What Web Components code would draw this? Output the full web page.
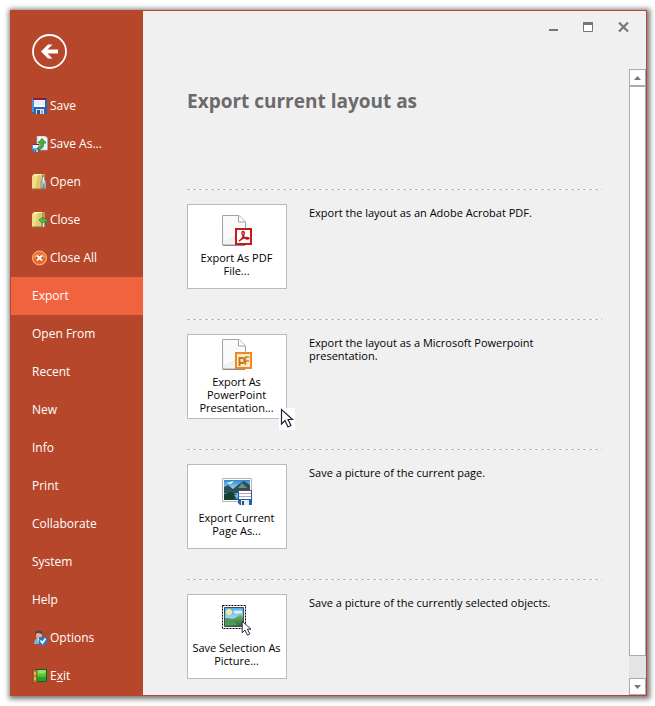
<!DOCTYPE html>
<html lang="en">
<head>
<meta charset="utf-8">
<title>Export</title>
<style>
html { background: #fff; }
body { margin: 0; box-sizing: border-box; min-height: 100vh; padding: 10px 8px 10px 10px; display: flex; font-family: "Open Sans", "Noto Sans", sans-serif; font-size: 12px; color: #000; }
</style>
</head>
<body>
<backstage-window>
  <backstage-nav slot="nav">
    <nav-item icon="save">Save</nav-item>
    <nav-item icon="saveas">Save As...</nav-item>
    <nav-item icon="open">Open</nav-item>
    <nav-item icon="close">Close</nav-item>
    <nav-item icon="closeall">Close All</nav-item>
    <nav-item selected>Export</nav-item>
    <nav-item>Open From</nav-item>
    <nav-item>Recent</nav-item>
    <nav-item>New</nav-item>
    <nav-item>Info</nav-item>
    <nav-item>Print</nav-item>
    <nav-item>Collaborate</nav-item>
    <nav-item>System</nav-item>
    <nav-item>Help</nav-item>
    <nav-item icon="options">Options</nav-item>
    <nav-item icon="exit">E<u>x</u>it</nav-item>
  </backstage-nav>
  <window-controls slot="controls"></window-controls>
  <export-panel heading="Export current layout as">
    <export-option icon="pdf" label="Export As PDF File...">Export the layout as an Adobe Acrobat PDF.</export-option>
    <export-option icon="ppt" label="Export As PowerPoint Presentation..." pointer>Export the layout as a Microsoft Powerpoint presentation.</export-option>
    <export-option icon="page" label="Export Current Page As...">Save a picture of the current page.</export-option>
    <export-option icon="selection" label="Save Selection As Picture...">Save a picture of the currently selected objects.</export-option>
  </export-panel>
  <scroll-bar slot="scroll"></scroll-bar>
</backstage-window>

<script>
const floppy = `<path d="M0 0H15V16H2L0 14Z" fill="#2563b4"/><path d="M0 0H2V14H0Z" fill="#4a91d6"/><path d="M1 0H14V2H1Z" fill="#8c1748"/><path d="M2 2H13V9H2Z" fill="#fafafa"/><path d="M2 4H13M2 6H13" stroke="#dcdfe4"/><path d="M4 11H12V16H4Z" fill="#e2e5e9"/><path d="M5 12H8V16H5Z" fill="#15579e"/><path d="M9 12H11V16H9Z" fill="#a7adb5"/>`;
const folder = `<path d="M0 2L2 0H10V15H0Z" fill="#f2dd8e"/><path d="M0 2H2V0H10V2Z" fill="#fff0ac"/><path d="M6 1H10V15H3Z" fill="#e0c871"/><path d="M10 0H13V14H10Z" fill="#b89c48"/><path d="M0 15H13" stroke="#8f7230"/>`;
const sheet = `<path d="M1.500 1.500H18L24.500 8V31H1.500Z" fill="#f0f1f1" stroke="#a3a3a3"/><path d="M2 2H17V8H24V16L3 27Z" fill="#fafafa"/><path d="M17.500 1.500V8H24" fill="#fff" stroke="#a3a3a3"/><path d="M2 31.500H24" stroke="#888"/>`;
const arrowShape = `<path d="M1.500 1.500V16L5 12.500L8 19L11 17.500L8 11.500H12.500Z" fill="#fff" stroke="#222336" stroke-width="1.200"/>`;
const landscapeDefs = `<defs><linearGradient id="sky" x2="0" y2="1"><stop stop-color="#4cadf0"/><stop offset="1" stop-color="#e7f6ef"/></linearGradient><linearGradient id="hill" x2="0" y2="1"><stop stop-color="#79b66c"/><stop offset="1" stop-color="#236b3a"/></linearGradient><linearGradient id="lake" x2="0" y2="1"><stop stop-color="#2b88d0"/><stop offset=".5" stop-color="#b9dcf1"/><stop offset="1" stop-color="#0c4e68"/></linearGradient></defs>`;

const icons = {
  save: [16, floppy],
  saveas: [16, `<path d="M5 0H13L15.500 2V14H5Z" fill="#eef4f7" stroke="#a4b9c4" stroke-width=".7"/><g transform="translate(0 8) scale(.5)">${floppy}</g><path d="M5 12C9 12 9 9 8.500 7H6L10 2.500L14 7H11.500C12 11 10 13.500 6 13.500Z" fill="#3fbd2d" stroke="#176f19" stroke-width=".7"/>`],
  open: [16, `${folder}<path d="M11 2L9 8V15H10.500L11.500 10L12.500 15H14V8Z" fill="#b8bec2" stroke="#687078" stroke-width=".6"/><path d="M11.500 3V8" stroke="#f4f4f4"/>`],
  close: [16, `${folder}<path d="M7 8L11 5V7C14 6 15.500 8 15.500 11C14 10 13 9 11 10V12Z" fill="#51bd50" stroke="#237b33" stroke-width=".7"/><path d="M11.500 11V15" stroke="#eee" stroke-width="2"/><path d="M10 11V15M13 11V15" stroke="#59656b"/>`],
  closeall: [16, `<circle cx="7.500" cy="8" r="7" fill="#f36b27" stroke="#ffbd8f"/><path d="M2 7A6 6 0 0 1 13 7C10 9 5 9 2 7Z" fill="#ffa35f"/><path d="M5 5.500L10 10.500M10 5.500L5 10.500" stroke="#8f5038" stroke-width="4"/><path d="M5 5.500L10 10.500M10 5.500L5 10.500" stroke="#fff3e7" stroke-width="2.300"/>`],
  options: [16, `<path d="M2 14C2 10 4 8 7 8S12 10 12 14Z" fill="#78b6e7"/><path d="M5.500 8L7 12L8.500 8Z" fill="#fff"/><ellipse cx="7" cy="5" rx="3" ry="4" fill="#e3b08c"/><path d="M3.500 5C3 1 5 .5 7 .5S11 1 10.500 5C9 3 7 3 5 3Z" fill="#454a4e"/><path d="M7 7H15V14L11 16L7 14Z" fill="#2877c9"/><path d="M8.500 10.500L10.500 13L13.500 8.500" fill="none" stroke="#fff" stroke-width="1.700"/>`],
  exit: [16, `<path d="M1 1H15V14H1Z" fill="#185b2c"/><path d="M5 2H14V13H5Z" fill="#8ee06a"/><path d="M5 7C8 4 11 8 14 4V13H5Z" fill="#4ece22"/><path d="M5 10C8 7 11 11 14 8V13H5Z" fill="#21a52c"/><path d="M1 1L5 2V14L1 16Z" fill="#bb842a" stroke="#6e4518" stroke-width=".8"/><path d="M2 4H4V7H2ZM2 9H4V12H2Z" fill="#e2b75b"/>`],
  pdf: [32, `${sheet}<path d="M15 15H30V30H15Z" fill="#fff" stroke="#cf1719" stroke-width="2"/><path d="M18 27C21 26 24 20 23 18C21 16 20 20 22 22C24 25 27 25.500 28 24.500C27 22.500 22 23.500 18 27Z" fill="none" stroke="#b6191b" stroke-width="1.400"/>`],
  ppt: [32, `${sheet}<path d="M15 15H30V30H15Z" fill="#fbe9cd" stroke="#f18624" stroke-width="2"/><path d="M18.500 28V20H21.500C24 20 24 25 21.500 25H18.500" fill="none" stroke="#c27a1b" stroke-width="2"/><path d="M28 19H24.500V27M24.500 23H28" fill="none" stroke="#c98529" stroke-width="1.500"/>`],
  page: [32, `${landscapeDefs}<path d="M1.500 4.500H30.500V27.500H1.500Z" fill="#fff" stroke="#b3b3b3"/><g transform="translate(0 1)"><path d="M3 5H29V25H3Z" fill="url(#lake)"/><path d="M3 12L7 10L12 14L18 9L23 6L29 10V18H3Z" fill="#28515b"/><path d="M17 13L21 8L26 13Z" fill="#6b8e8d"/><path d="M5 8L13 6L10 9Z" fill="#f1f6fa"/><path d="M3 19L10 17L17 20L12 25H3Z" fill="#193d31"/><path d="M13 20L20 18L16 24Z" fill="#79b8d8"/></g><g transform="translate(17 16)"><path d="M0 0H14V15H2L0 13Z" fill="#245fad"/><path d="M1 0H13V1H1Z" fill="#9c294b"/><path d="M1 1H13V9H1Z" fill="#fff"/><path d="M1 3.500H13M1 6.500H13" stroke="#a9adb9"/><path d="M3 10H11V15H3Z" fill="#e6f0f2"/><path d="M4 11H6V15H4Z" fill="#1e508e"/></g>`],
  selection: [32, `${landscapeDefs}<path d="M1.500 1.500H24.500V24.500H1.500Z" fill="#fff" stroke="#000" stroke-dasharray="2 1"/><path d="M3.500 3.500H22.500V22.500H3.500Z" fill="url(#sky)" stroke="#424961"/><path d="M12 8C14 4 17 8 20 6L22 9L15 10Z" fill="#edf8ff" opacity=".8"/><path d="M4 14C7 13 11 16 14 14S20 9 22 13V22H4Z" fill="url(#hill)"/><path d="M4 16C9 13 14 20 18 21L4 22Z" fill="#4c995a"/><circle cx="8" cy="8" r="2.500" fill="#ffe374" stroke="#fff4b8"/><g transform="translate(20 16) scale(.8)">${arrowShape}</g>`]
};
const drawIcon = (name) => {
  const [size, art] = icons[name];
  return `<svg width="${size}" height="${size}" viewBox="0 0 ${size} ${size}" aria-hidden="true">${art}</svg>`;
};

class BackstageWindow extends HTMLElement {
  connectedCallback() {
    this.attachShadow({mode: "open"}).innerHTML = `<style>
      :host { flex: 1; min-width: 0; display: grid; grid-template-columns: auto 1fr; background: #f0f0f0; border: 1px solid #b7472a; box-shadow: 1px 1px 5px 2px #777; }
      main { display: grid; grid-template: auto 1fr / minmax(0, 1fr) auto; min-width: 0; }
      .controls { grid-column: 1 / -1; }
    </style><slot name="nav"></slot><main><div class="controls"><slot name="controls"></slot></div><slot></slot><slot name="scroll"></slot></main>`;
  }
}

class BackstageNav extends HTMLElement {
  connectedCallback() {
    this.attachShadow({mode: "open"}).innerHTML = `<style>
      :host { display: block; width: 132px; background: #b7472a; color: #fff; }
      .back { display: block; margin: 23px 0 18px 21px; padding: 0; width: 35px; height: 35px; border: 0; background: none; }
      svg { display: block; }
    </style><button class="back" aria-label="Back"><svg width="35" height="35" viewBox="0 0 35 35"><circle cx="17.500" cy="17.500" r="16.500" fill="none" stroke="#fff" stroke-width="1.800"/><path d="M9 17.500L16 10.500H20.500L15.500 15.500H26V19.500H15.500L20.500 24.500H16Z" fill="#fff"/></svg></button><nav><slot></slot></nav>`;
  }
}

class NavItem extends HTMLElement {
  connectedCallback() {
    const icon = this.getAttribute("icon");
    this.attachShadow({mode: "open"}).innerHTML = `<style>
      :host { display: block; }
      :host([selected]) { background: #f1623f; }
      button { display: flex; align-items: center; gap: 2px; width: 100%; height: 38px; padding: 0 0 0 21px; border: 0; background: none; color: inherit; font: inherit; text-align: left; white-space: pre; }
      span { padding-bottom: 2px; }
    </style><button>${icon ? drawIcon(icon) : ""}<span><slot></slot></span></button>`;
  }
}

class WindowControls extends HTMLElement {
  connectedCallback() {
    this.attachShadow({mode: "open"}).innerHTML = `<style>
      :host { display: flex; justify-content: flex-end; height: 58px; padding-right: 10px; box-sizing: border-box; }
      button { width: 25px; height: 32px; margin-left: 10px; padding: 0; border: 0; background: none; display: grid; place-items: center; }
    </style>
    <button aria-label="Minimize"><svg width="11" height="12" viewBox="0 0 11 12"><path d="M1 8H10V10H1Z" fill="#777"/></svg></button>
    <button aria-label="Maximize"><svg width="11" height="12" viewBox="0 0 11 12"><path d="M.5 1.500H9.500V10.500H.5Z" fill="#fff" stroke="#777"/><path d="M0 1H10V4H0Z" fill="#777"/></svg></button>
    <button aria-label="Close"><svg width="11" height="12" viewBox="0 0 11 12"><path d="M1 1.500L10 10.500M10 1.500L1 10.500" stroke="#777" stroke-width="2.200"/></svg></button>`;
  }
}

class ExportPanel extends HTMLElement {
  connectedCallback() {
    this.attachShadow({mode: "open"}).innerHTML = `<style>
      :host { display: block; padding: 18px 27px 16px 44px; min-width: 0; }
      h1 { margin: 0 0 74px; font-size: 19px; line-height: 28px; font-weight: 700; color: #6b6b6b; }
      section { display: grid; gap: 30px; }
    </style><h1>${this.getAttribute("heading")}</h1><section><slot></slot></section>`;
  }
}

class ExportOption extends HTMLElement {
  connectedCallback() {
    this.attachShadow({mode: "open"}).innerHTML = `<style>
      :host { display: block; font-size: 11px; line-height: 13px; }
      .rule { height: 1px; margin-bottom: 14px; background: repeating-linear-gradient(90deg, #bbb 0 3px, #fff 3px 6px); }
      .row { display: grid; grid-template-columns: 100px 1fr; gap: 22px; }
      .tile { position: relative; }
      button { display: flex; flex-direction: column; align-items: center; justify-content: center; gap: 5px; width: 100%; min-height: 85px; padding: 0 3px 2px 2px; border: 1px solid #bbb; background: #fff; color: inherit; font: inherit; }
      p { margin: 2px 0 0; max-width: 260px; }
      .pointer { position: absolute; right: -8px; bottom: -11px; width: 16px; height: 22px; background: #fff; }
      svg { display: block; }
    </style><div class="rule"></div><div class="row"><div class="tile"><button aria-describedby="note">${drawIcon(this.getAttribute("icon"))}<span>${this.getAttribute("label")}</span></button>${this.hasAttribute("pointer") ? `<svg class="pointer" viewBox="-1 0 16 22">${arrowShape}</svg>` : ""}</div><p id="note"><slot></slot></p></div>`;
  }
}

class ScrollBar extends HTMLElement {
  connectedCallback() {
    this.attachShadow({mode: "open"}).innerHTML = `<style>
      :host { display: flex; flex-direction: column; width: 17px; background: #e4e4e4; }
      button, .thumb { box-sizing: border-box; border: 1px solid #ababab; background: #fff; }
      button { height: 17px; padding: 0; display: grid; place-items: center; flex: none; }
      .thumb { flex: 1; margin-bottom: 22px; }
    </style>
    <button aria-label="Scroll up"><svg width="7" height="4" viewBox="0 0 7 4"><path d="M0 4L3.500 0L7 4Z" fill="#777"/></svg></button>
    <div class="thumb"></div>
    <button aria-label="Scroll down"><svg width="7" height="4" viewBox="0 0 7 4"><path d="M0 0L3.500 4L7 0Z" fill="#777"/></svg></button>`;
  }
}

customElements.define("backstage-window", BackstageWindow);
customElements.define("backstage-nav", BackstageNav);
customElements.define("nav-item", NavItem);
customElements.define("window-controls", WindowControls);
customElements.define("export-panel", ExportPanel);
customElements.define("export-option", ExportOption);
customElements.define("scroll-bar", ScrollBar);
</script>
</body>
</html>
